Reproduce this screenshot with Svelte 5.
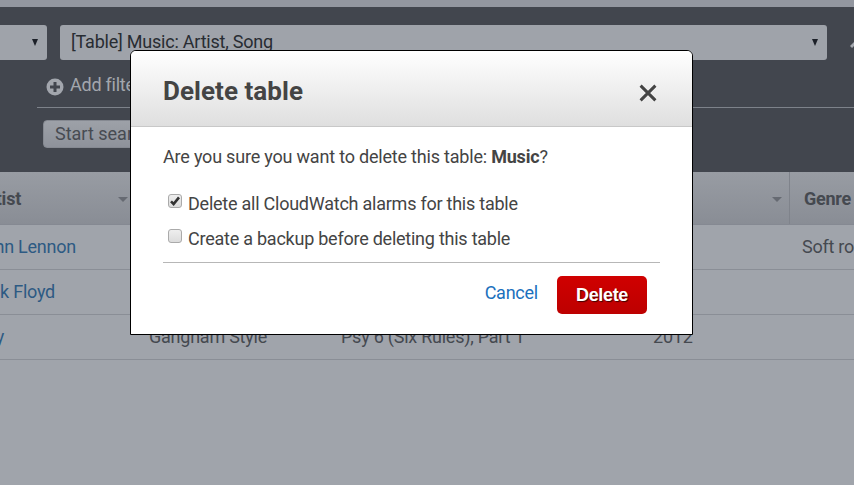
<script>
  const columns = [
    { label: 'Artist', sort: true },
    { label: '', sort: false },
    { label: '', sort: false },
    { label: '', sort: true },
    { label: 'Genre', sort: false }
  ];
  // edge: visible width of the artist name in the horizontally scrolled table
  const rows = [
    { edge: 76, cells: ['John Lennon', '', '', '', 'Soft rock'] },
    { edge: 55, cells: ['Pink Floyd', '', '', '', ''] },
    { edge: 4, cells: ['Psy', 'Gangnam Style', 'Psy 6 (Six Rules), Part 1', '2012', ''] }
  ];
  const options = $state([
    { label: 'Delete all CloudWatch alarms for this table', checked: true },
    { label: 'Create a backup before deleting this table', checked: false }
  ]);
</script>

<div class="page">
  <div class="topbar"></div>
  <section class="search">
    <div class="selects">
      <div class="select short"><i class="caret"></i></div>
      <div class="select long"><span>[Table] Music: Artist, Song</span><i class="caret"></i></div>
      <svg class="collapse" width="16" height="16" viewBox="0 0 16 16"><path d="M1 11 8 4 15 11" /></svg>
    </div>
    <div class="filter">
      <svg width="18" height="18" viewBox="0 0 18 18"><circle cx="9" cy="9" r="8.5" /><path d="M9 4v10M4 9h10" /></svg>
      <span>Add filter</span>
    </div>
    <div class="rule"></div>
    <button class="start">Start search</button>
  </section>

  <div class="grid head">
    {#each columns as c, i}
      <div class="cell c{i}"><span>{c.label}</span>{#if c.sort}<i class="sort"></i>{/if}</div>
    {/each}
  </div>
  {#each rows as row}
    <div class="grid row">
      {#each row.cells as value, i}
        <div class="cell c{i}"><span style:width={i === 0 ? `${row.edge}px` : null}>{value}</span></div>
      {/each}
    </div>
  {/each}

  <div class="dialog" role="dialog" aria-label="Delete table">
    <header>
      <h1>Delete table</h1>
      <svg class="close" width="18" height="18" viewBox="0 0 18 18"><path d="M1.6 1.6 16.4 16.4M16.4 1.6 1.6 16.4" /></svg>
    </header>
    <div class="body">
      <p>Are you sure you want to delete this table: <b>Music</b>?</p>
      {#each options as option}
        <label>
          <span class="box">
            <input type="checkbox" bind:checked={option.checked} />
            {#if option.checked}<svg width="14" height="14" viewBox="0 0 14 14"><path d="M3 7.4 5.6 10 11 3.4" /></svg>{/if}
          </span>
          <span>{option.label}</span>
        </label>
      {/each}
      <footer>
        <span class="cancel">Cancel</span>
        <button class="delete">Delete</button>
      </footer>
    </div>
  </div>
</div>

<style>
  :global(body) { margin: 0; }
  .page {
    position: relative;
    width: 854px;
    height: 485px;
    overflow: hidden;
    background: #a0a4ab;
    font: 18px/24px Roboto, "Liberation Sans", sans-serif;
    letter-spacing: -0.24px;
    color: #454950;
    white-space: nowrap;
  }
  .page * { box-sizing: border-box; }
  .topbar { height: 7px; background: #9397a0; }
  .search { height: 165px; padding-top: 18px; background: #42464e; }
  .selects { display: flex; align-items: center; height: 35px; }
  .select {
    display: flex;
    flex: none;
    align-items: center;
    justify-content: flex-end;
    height: 35px;
    padding-right: 9px;
    border-radius: 3px;
    background: #9fa3aa;
    color: #282c32;
    letter-spacing: -0.22px;
  }
  .select span { margin-top: -1px; }
  .short { width: 47px; border-radius: 0 3px 3px 0; }
  .long { width: 767px; margin-left: 13px; padding-left: 11px; justify-content: space-between; }
  .caret { border: 3.5px solid transparent; border-top: 7px solid #1c2028; border-bottom: 0; }
  .collapse { margin: 3px 0 0 23px; flex: none; fill: none; stroke: #a5a9b0; stroke-width: 3; }
  .filter { display: flex; align-items: center; gap: 6px; height: 24px; margin: 13px 0 0 46px; color: #a2a6ad; }
  .filter svg { margin-top: 3px; }
  .filter circle { fill: #a2a6ad; }
  .filter path { stroke: #42464e; stroke-width: 3; }
  .rule { height: 1px; margin: 10px 0 0 37px; background: #7d828a; }
  .start {
    display: block;
    height: 28px;
    margin: 12px 0 0 43px;
    padding: 0 11px;
    border: 1px solid #858991;
    border-radius: 4px;
    background: linear-gradient(#9da1a8, #8e929b);
    color: #474b52;
    font: inherit;
    letter-spacing: 0;
  }
  .grid { display: grid; grid-template-columns: 138px 192px 312px 148px 80px; }
  .head { height: 53px; background: linear-gradient(#989ca3, #898d95); border-bottom: 1px solid #858992; font-weight: 700; }
  .row { height: 45px; border-bottom: 1px solid #8a8e96; }
  .cell { display: flex; align-items: center; justify-content: space-between; padding: 0 8px 0 11px; }
  .head .cell { border-right: 1px solid #7f838b; padding-top: 2px; padding-left: 14px; }
  .head .c3 { padding-right: 7px; }
  .head .c4 { border: 0; }
  .row .c4 { padding-left: 12px; }
  .row .c0 { padding: 0; color: #2d5a83; }
  .head .c0 { padding: 2px 9px 0 0; }
  .c0 span { display: flex; justify-content: flex-end; }
  .head .c0 span { width: 21px; }
  .sort { border: 5px solid transparent; border-top-color: #666a72; border-bottom: 0; }

  .dialog {
    position: absolute;
    left: 130px;
    top: 50px;
    width: 563px;
    height: 285px;
    border: 1px solid #000;
    border-radius: 6px 6px 0 0;
    background: #fff;
    color: #444;
    overflow: hidden;
  }
  header {
    display: flex;
    align-items: center;
    justify-content: space-between;
    height: 76px;
    padding: 5px 35px 0 32px;
    border-bottom: 1px solid #c8c8c8;
    background: linear-gradient(#fff, #dfdfdf);
  }
  h1 { margin: 0; font-size: 26px; line-height: 32px; font-weight: 700; letter-spacing: 0.05px; }
  .close { margin-top: 4px; fill: none; stroke: #444; stroke-width: 3; }
  .body { padding: 18px 32px 0; }
  p { margin: 0 0 23px; letter-spacing: -0.2px; }
  label { display: flex; height: 24px; margin-bottom: 11px; padding-left: 5px; }
  .box { position: relative; flex: none; width: 14px; height: 14px; margin: 2px 6px 0 0; }
  input {
    display: block;
    appearance: none;
    width: 14px;
    height: 14px;
    margin: 0;
    border: 1px solid #aaa;
    border-radius: 3px;
    background: linear-gradient(#eee, #dcdcdc);
  }
  .box svg { position: absolute; left: 0; top: 0; pointer-events: none; }
  .box path { fill: none; stroke: #333; stroke-width: 2.6; }
  footer { display: flex; align-items: flex-start; justify-content: flex-end; border-top: 1px solid #b7b7b7; padding: 13px 13px 0 0; }
  .cancel { margin: 5px 19px 0 0; color: #1b70bd; }
  .delete {
    width: 90px;
    height: 38px;
    padding: 0;
    border: 0;
    border-radius: 5px;
    background: linear-gradient(#d00000, #bd0000);
    color: #fff;
    font: 700 18px/38px "Liberation Sans", Arial, sans-serif;
    letter-spacing: -0.35px;
    text-shadow: 1px 1px 1px #400;
  }
</style>
